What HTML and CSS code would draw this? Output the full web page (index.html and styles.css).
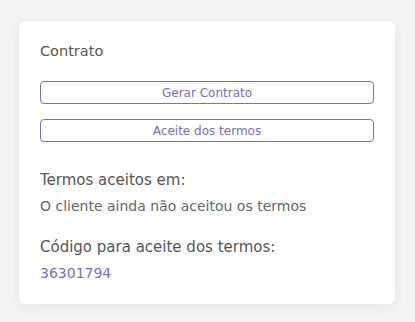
FILE: index.html
```html
<!DOCTYPE html>
<html lang="pt-BR">
<head>
    <meta charset="UTF-8">
    <meta name="viewport" content="width=device-width, initial-scale=1.0">
    <title>Contrato</title>
    <link rel="stylesheet" href="styles.css">
</head>
<body>
    <div class="card">
        <h3 class="card-title">Contrato</h3>
        <div class="actions">
            <button type="button" class="btn-outline">Gerar Contrato</button>
            <button type="button" class="btn-outline">Aceite dos termos</button>
        </div>
        <div class="info">
            <p class="info-label">Termos aceitos em:</p>
            <p class="info-value">O cliente ainda não aceitou os termos</p>
        </div>
        <div class="info">
            <p class="info-label">Código para aceite dos termos:</p>
            <p class="info-value code">36301794</p>
        </div>
    </div>
</body>
</html>
```

FILE: styles.css
```css
body {
    font-family: "DejaVu Sans", "Open Sans", sans-serif;
    margin: 0;
    padding: 21px 20px 18px 19px;
    background-color: #f3f3f3;
}
.card {
    background: #fff;
    border-radius: 6px;
    box-shadow: 0 2px 12px rgba(0, 0, 0, 0.06);
    padding: 21px 21px 22px 21px;
    height: 240px;
}
.card-title {
    margin: 0;
    font-size: 14.5px;
    font-weight: 500;
    color: #555;
    line-height: 18px;
}
.actions {
    display: flex;
    flex-direction: column;
    gap: 15px;
    margin-top: 21px;
}
.btn-outline {
    height: 23px;
    padding: 0;
    border: 1px solid #7a6cc8;
    border-radius: 4px;
    background: #fff;
    color: #7a6cc8;
    font-family: inherit;
    font-size: 12px;
    cursor: pointer;
}
.info {
    margin-top: 28px;
}
.info + .info {
    margin-top: 21px;
}
.info p {
    margin: 0;
}
.info-label {
    font-size: 15px;
    font-weight: 500;
    color: #555;
    line-height: 20px;
}
.info-value {
    margin-top: 6px !important;
    font-size: 14px;
    color: #666;
    line-height: 20px;
}
.code {
    color: #7a6cc8;
}
```
